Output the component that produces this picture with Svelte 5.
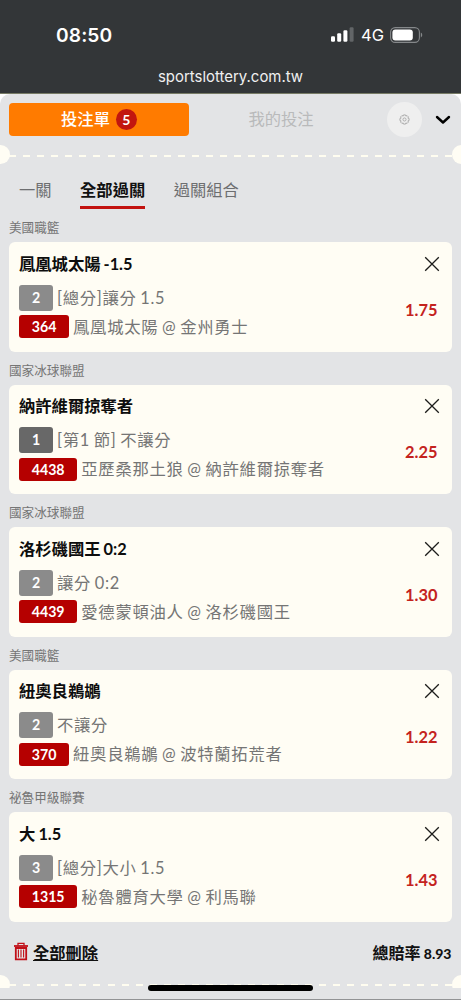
<script>
  let activeTab = 1
  const tabs = ['一關', '全部過關', '過關組合']

  let bets = [
    { league: '美國職籃', pick: '鳳凰城太陽 -1.5', option: '2', type: '[總分]讓分 1.5', code: '364', match: '鳳凰城太陽 @ 金州勇士', odds: '1.75' },
    { league: '國家冰球聯盟', pick: '納許維爾掠奪者', option: '1', dark: true, type: '[第1 節] 不讓分', code: '4438', match: '亞歷桑那土狼 @ 納許維爾掠奪者', odds: '2.25' },
    { league: '國家冰球聯盟', pick: '洛杉磯國王 0:2', option: '2', type: '讓分 0:2', code: '4439', match: '愛德蒙頓油人 @ 洛杉磯國王', odds: '1.30' },
    { league: '美國職籃', pick: '紐奧良鵜鶘', option: '2', type: '不讓分', code: '370', match: '紐奧良鵜鶘 @ 波特蘭拓荒者', odds: '1.22' },
    { league: '祕魯甲級聯賽', pick: '大 1.5', option: '3', type: '[總分]大小 1.5', code: '1315', match: '秘魯體育大學 @ 利馬聯', odds: '1.43' }
  ]

  function removeBet(bet) {
    bets = bets.filter((b) => b !== bet)
  }
</script>

<div class="screen">
  <header>
    <div class="status">
      <span class="time">08:50</span>
      <div class="signals">
        <svg class="bars" width="23" height="15" viewBox="0 0 23 15">
          <rect x="0" y="9.2" width="4" height="5.6" rx="1.2" fill="#fff" />
          <rect x="6.2" y="6.2" width="4" height="8.6" rx="1.2" fill="#fff" />
          <rect x="12.4" y="3.2" width="4" height="11.6" rx="1.2" fill="#fff" />
          <rect x="18.6" y="0.2" width="4" height="14.6" rx="1.2" fill="#626567" />
        </svg>
        <span class="network">4G</span>
        <svg class="battery" width="33" height="16" viewBox="0 0 33 16">
          <rect x="0.6" y="0.6" width="28.8" height="14.8" rx="4.6" fill="none" stroke="#85888a" stroke-width="1.1" />
          <rect x="2.4" y="2.4" width="20.4" height="11.2" rx="3" fill="#fff" />
          <path d="M30.8 5.6c1.9.7 1.9 4.1 0 4.8z" fill="#85888a" />
        </svg>
      </div>
    </div>
    <div class="address">sportslottery.com.tw</div>
  </header>

  <main>
    <div class="panel">
      <nav class="top">
        <button class="slip"><span class="label">投注單</span><span class="count">5</span></button>
        <button class="mine">我的投注</button>
        <button class="settings" aria-label="設定">
          <svg width="11" height="11" viewBox="0 0 12 12" fill="none" stroke="#999" stroke-width="0.8">
            <path d="M4.900 1h2.200l.4 1.300 1.300-.6 1.500 1.500-.6 1.300 1.300.4v2.200l-1.300.4.6 1.300-1.500 1.500-1.300-.6-.4 1.300H4.900l-.4-1.300-1.300.6-1.500-1.500.6-1.300L1 7.100V4.900l1.300-.4-.6-1.300 1.500-1.500 1.300.6z" stroke-linejoin="round" />
            <circle cx="6" cy="6" r="1.700" />
          </svg>
        </button>
        <button class="collapse" aria-label="收合">
          <svg width="16" height="10" viewBox="0 0 16 10" fill="none" stroke="#000" stroke-width="2.4">
            <path d="M2 2l6 5.500L14 2" stroke-linecap="round" stroke-linejoin="round" />
          </svg>
        </button>
      </nav>

      <div class="divider"><i></i><i></i></div>

      <div class="tabs">
        {#each tabs as tab, i}
          <button class:active={i === activeTab} on:click={() => (activeTab = i)}>{tab}</button>
        {/each}
      </div>

      {#each bets as bet}
        <section>
          <h2>{bet.league}</h2>
          <div class="card">
            <div class="info">
              <div class="pick">{bet.pick}</div>
              <div class="row type"><span class="option" class:dark={bet.dark}>{bet.option}</span>{bet.type}</div>
              <div class="row match"><span class="code">{bet.code}</span>{bet.match}</div>
            </div>
            <div class="side">
              <button class="remove" aria-label="刪除" on:click={() => removeBet(bet)}>
                <svg width="16" height="16" viewBox="0 0 16 16" fill="none" stroke="#1c1c1a" stroke-width="1.3">
                  <path d="M1.200 1.200l13.600 13.600M14.800 1.200L1.200 14.800" />
                </svg>
              </button>
              <span class="odds">{bet.odds}</span>
            </div>
          </div>
        </section>
      {/each}

      <div class="summary">
        <button class="clear">
          <svg width="16" height="19" viewBox="0 0 16 19" fill="none" stroke="#c10f18">
            <path d="M1 4h14" stroke-width="1.8" />
            <path d="M5 3.500V1.400h6v2.100" stroke-width="1.3" />
            <path d="M2.800 6v11.300h10.400V6z" stroke-width="1.8" />
            <path d="M5.400 7.500v8M8 7.500v8M10.600 7.500v8" stroke-width="1.1" />
          </svg>
          <span>全部刪除</span>
        </button>
        <span class="total">總賠率 <b>8.93</b></span>
      </div>

      <div class="divider bottom"><i></i><i></i></div>
    </div>
  </main>
  <div class="home"></div>
</div>

<style>
  :global(body) {
    margin: 0;
  }

  .screen {
    position: relative;
    box-sizing: border-box;
    width: 461px;
    height: 1000px;
    overflow: hidden;
    background: #fffdf4;
    border-bottom: 1px solid #929395;
    font-family: Lato, "Noto Sans CJK TC", sans-serif;
    color: #757575;
  }

  button {
    padding: 0;
    border: 0;
    background: none;
    font: inherit;
    color: inherit;
    letter-spacing: inherit;
  }

  svg {
    display: block;
    flex: none;
  }

  header {
    height: 93px;
    background: #333638;
    color: #fff;
    font-family: Inter, sans-serif;
  }

  .status {
    display: flex;
    justify-content: space-between;
    height: 62px;
    padding: 7px 38px 0 56px;
    box-sizing: border-box;
    align-items: center;
  }

  .time {
    font-size: 19.2px;
    font-weight: 600;
    letter-spacing: 0.1px;
  }

  .signals {
    display: flex;
    align-items: center;
  }

  .network {
    margin: 0 7px 0 7px;
    font-size: 16.5px;
    font-weight: 400;
    width: 22px;
  }

  .address {
    font-size: 14.95px;
    line-height: 20px;
    padding-top: 5px;
    text-align: center;
    color: #f0f0f0;
  }

  main {
    border-top: 1px solid #777b65;
    background: #fff;
  }

  .panel {
    height: 905px;
    overflow: hidden;
    border-radius: 10px 10px 0 0;
    background: #e3e4e6;
  }

  .top {
    display: flex;
    align-items: center;
    height: 51px;
    padding: 0 10px 0 9px;
  }

  .slip {
    display: flex;
    align-items: center;
    justify-content: center;
    width: 180px;
    height: 33px;
    border-radius: 4px;
    background: #ff7b00;
    color: #fff;
    font-size: 16.3px;
    font-weight: 500;
  }

  .label {
    padding-bottom: 3px;
  }

  .count {
    width: 21px;
    height: 21px;
    margin-left: 6px;
    border-radius: 50%;
    background: #c2160f;
    font-size: 14px;
    font-weight: 700;
    line-height: 21px;
    text-align: center;
  }

  .mine {
    width: 184px;
    padding-bottom: 3px;
    font-size: 16.3px;
    color: #b9babb;
  }

  .settings {
    display: grid;
    place-items: center;
    width: 35px;
    height: 35px;
    margin-left: 14px;
    border-radius: 50%;
    background: #efefef;
  }

  .collapse {
    margin-left: 13px;
  }

  .divider {
    display: flex;
    justify-content: space-between;
    height: 19px;
    overflow: hidden;
    background: repeating-linear-gradient(90deg, #fffdf0 0 7px, transparent 7px 14.08px) 9px 9.5px / 443px 2px no-repeat;
  }

  .divider i {
    width: 19px;
    height: 19px;
    margin: 0 -9.5px;
    border-radius: 50%;
    background: #fffdf4;
  }

  .bottom {
    height: 13px;
  }

  .tabs {
    display: flex;
    gap: 28.5px;
    height: 45px;
    box-sizing: border-box;
    padding: 7px 19px 0;
    font-size: 16.3px;
    color: #6d6e70;
  }

  .tabs button {
    height: 38px;
    border-bottom: 3.5px solid transparent;
    box-sizing: border-box;
  }

  .tabs .active {
    border-color: #c2120f;
    color: #111;
    font-weight: 700;
  }

  section {
    padding: 0 9px;
    height: 142.6px;
    box-sizing: border-box;
  }

  h2 {
    margin: 0;
    padding-top: 9px;
    height: 24px;
    font-size: 12.6px;
    font-weight: 400;
    line-height: 20px;
  }

  .card {
    display: flex;
    justify-content: space-between;
    height: 109.6px;
    box-sizing: border-box;
    padding: 9.5px 12px 0 10px;
    border-radius: 6px;
    background: #fffdf4;
  }

  .pick {
    height: 24px;
    font-size: 16.35px;
    font-weight: 700;
    line-height: 24px;
    color: #0d0d0d;
    letter-spacing: -0.05px;
    word-spacing: -0.8px;
  }

  .row {
    display: flex;
    align-items: center;
    font-size: 16.35px;
    letter-spacing: 0.7px;
    word-spacing: -1.1px;
    white-space: pre;
    line-height: 24px;
  }

  .type {
    height: 26px;
    margin-top: 9px;
  }

  .match {
    height: 23px;
    margin-top: 4.5px;
  }

  .option,
  .code {
    border-radius: 3px;
    color: #fff;
    font-size: 14.2px;
    font-weight: 700;
    letter-spacing: 0;
    text-align: center;
  }

  .option {
    width: 34px;
    margin-right: 4px;
    background: #8b8b8b;
    line-height: 26px;
  }

  .dark {
    background: #686868;
  }

  .code {
    padding: 0 12.7px;
    margin-right: 4px;
    background: #b50000;
    line-height: 23px;
  }

  .side {
    display: flex;
    flex-direction: column;
    align-items: flex-end;
    justify-content: space-between;
    height: 64px;
    padding-top: 4px;
  }

  .odds {
    margin-right: 2.5px;
    font-size: 16.4px;
    font-weight: 700;
    line-height: 20px;
    color: #c4231e;
  }

  .summary {
    display: flex;
    align-items: center;
    justify-content: space-between;
    height: 53px;
    box-sizing: border-box;
    padding: 7px 9.5px 0 13px;
    color: #111;
    font-size: 16.3px;
    font-weight: 700;
  }

  .clear {
    display: flex;
    align-items: center;
    gap: 4px;
  }

  .clear span {
    text-decoration: underline;
  }

  .total {
    font-size: 16px;
    word-spacing: -0.5px;
  }

  .total b {
    font-size: 14px;
  }

  .home {
    position: absolute;
    left: 148px;
    bottom: 8px;
    width: 165px;
    height: 6px;
    border-radius: 3px;
    background: #000;
  }
</style>
